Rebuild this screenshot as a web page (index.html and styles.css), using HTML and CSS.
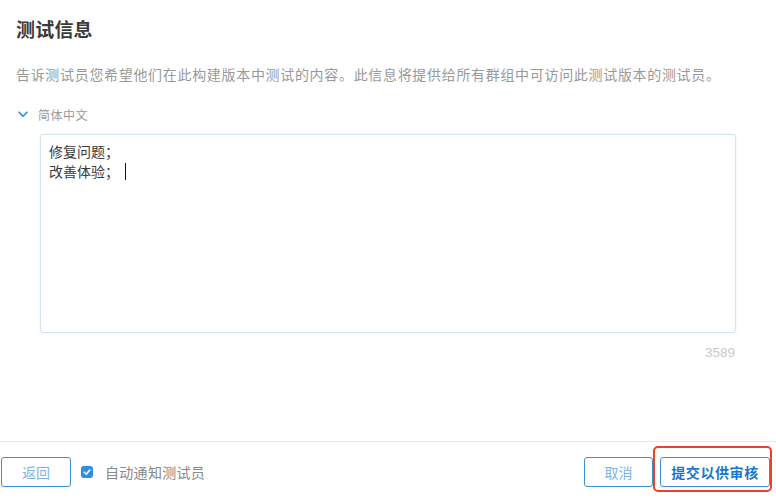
FILE: index.html
```html
<!DOCTYPE html>
<html lang="zh-CN">
<head>
<meta charset="utf-8">
<title>测试信息</title>
<link rel="stylesheet" href="styles.css">
</head>
<body>
<div class="page">
  <main class="content">
    <h1 class="title">测试信息</h1>
    <p class="desc">告诉测试员您希望他们在此构建版本中测试的内容。此信息将提供给所有群组中可访问此测试版本的测试员。</p>
    <div class="lang">
      <svg class="chevron" width="10" height="7" viewBox="0 0 10 7"><polyline points="1,1.2 5,5.2 9,1.2" fill="none" stroke="#2a8de0" stroke-width="1.6" stroke-linecap="round" stroke-linejoin="round"/></svg>
      <span class="lang-name">简体中文</span>
    </div>
    <div class="editor-wrap">
      <div class="editor">
        <div class="line">修复问题；</div>
        <div class="line">改善体验；<span class="caret"></span></div>
      </div>
      <div class="count">3589</div>
    </div>
  </main>
  <footer class="footer">
    <div class="footer-left">
      <button class="btn">返回</button>
      <label class="notify">
        <span class="check"><svg width="12" height="12" viewBox="0 0 12 12"><polyline points="3.2,6.2 5.2,8.2 8.8,4" fill="none" stroke="#fff" stroke-width="1.6" stroke-linecap="round" stroke-linejoin="round"/></svg></span>
        <span class="notify-text">自动通知测试员</span>
      </label>
    </div>
    <div class="footer-right">
      <button class="btn">取消</button>
      <div class="submit-wrap">
        <button class="btn btn-primary">提交以供审核</button>
        <span class="highlight"></span>
      </div>
    </div>
  </footer>
</div>
</body>
</html>
```
FILE: styles.css
```css
* { box-sizing: border-box; }
html, body {
  margin: 0;
  padding: 0;
  background: #fff;
  font-family: "Noto Sans CJK SC", "Noto Sans", sans-serif;
}
.page {
  width: 776px;
  height: 498px;
  display: flex;
  flex-direction: column;
}
.content {
  flex: 1;
  padding: 0 16px;
}
.title {
  margin: 0;
  padding-top: 16px;
  font-size: 19px;
  line-height: 26px;
  font-weight: 600;
  color: #3a3a3a;
  letter-spacing: 0.2px;
}
.desc {
  margin: 22px 0 0;
  font-size: 14px;
  line-height: 20px;
  color: #999;
  letter-spacing: 0.68px;
  white-space: nowrap;
}
.lang {
  margin-top: 21px;
  display: flex;
  align-items: center;
  height: 18px;
}
.chevron {
  margin-left: 2px;
  margin-right: 10px;
}
.lang-name {
  font-size: 12px;
  color: #999;
  letter-spacing: 0.5px;
}
.editor-wrap {
  margin: 11px 24px 0;
}
.editor {
  height: 199px;
  border: 1px solid #d5e4ea;
  border-radius: 3px;
  box-shadow: 0 0 2px rgba(160, 200, 215, 0.35);
  padding: 6px 8px;
  font-size: 14px;
  line-height: 20px;
  color: #3a3a3a;
}
.line { white-space: nowrap; }
.caret {
  display: inline-block;
  width: 1px;
  height: 17px;
  background: #111;
  vertical-align: -3px;
  margin-left: 6px;
}
.count {
  text-align: right;
  font-family: "Liberation Sans", sans-serif;
  font-size: 13.5px;
  line-height: 16px;
  margin-top: 12px;
  color: #c8c8c8;
  padding-right: 1px;
}
.footer {
  height: 57px;
  border-top: 1px solid #e6e6e6;
  padding: 15px 6px 0 1px;
  display: flex;
  justify-content: space-between;
  align-items: flex-start;
}
.footer-left, .footer-right {
  display: flex;
  align-items: center;
}
.btn {
  height: 30px;
  min-width: 70px;
  padding: 0 10px;
  border: 1px solid #3a8fd8;
  border-radius: 3px;
  background: #fff;
  font-family: inherit;
  font-size: 14px;
  color: #79b6e6;
  cursor: pointer;
}
.footer-right .btn { min-width: 69px; }
.notify {
  display: flex;
  align-items: center;
  margin-left: 10px;
}
.check {
  width: 12px;
  height: 12px;
  border-radius: 3px;
  background: #2b8fe3;
  display: flex;
}
.notify-text {
  margin-left: 12px;
  font-size: 14px;
  color: #888;
  letter-spacing: 0.3px;
}
.submit-wrap {
  position: relative;
  margin-left: 7px;
}
.footer-right .btn-primary {
  width: 110px;
  padding: 0;
  font-weight: 700;
  color: #1b77c9;
  letter-spacing: 0.6px;
}
.highlight {
  position: absolute;
  left: -7px;
  right: -2px;
  top: -11px;
  bottom: -5px;
  border: 2px solid #e5432b;
  border-radius: 5px;
  pointer-events: none;
}
```
